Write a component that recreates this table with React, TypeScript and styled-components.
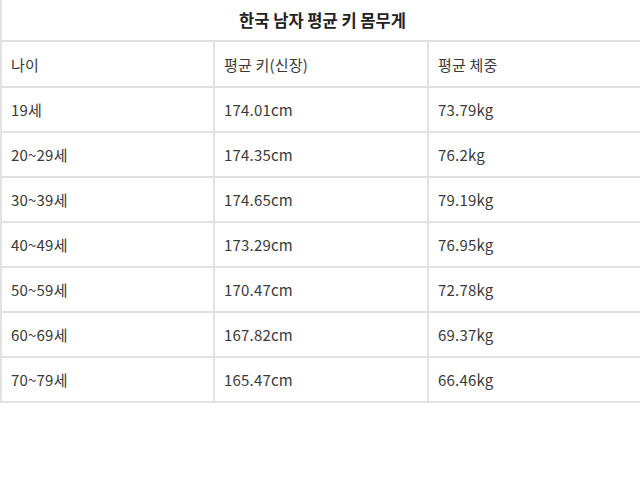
import styled, { createGlobalStyle } from 'styled-components';

const GlobalStyle = createGlobalStyle`
  html, body {
    margin: 0;
    padding: 0;
    overflow: hidden;
    background: #fff;
  }
`;

const Page = styled.main`
  width: 640px;
  height: 481px;
  overflow: hidden;
  font-family: 'Noto Sans CJK KR', 'Noto Sans', sans-serif;
  color: #333;
`;

const Table = styled.table`
  width: 644px;
  border-collapse: collapse;
  table-layout: fixed;
`;

const TitleCell = styled.th`
  height: 40px;
  padding: 0;
  font-size: 16.5px;
  font-weight: 700;
  color: #222;
  text-align: center;
  border-left: 2px solid #e2e2e2;
  border-bottom: 2px solid #e2e2e2;
`;

const Cell = styled.td<{ $head?: boolean }>`
  height: ${({ $head }) => ($head ? 44 : 43)}px;
  padding: 0 0 0 9px;
  font-size: 15px;
  font-weight: 400;
  letter-spacing: 0.2px;
  color: #3a3a3a;
  text-align: left;
  border: 2px solid #e2e2e2;
  border-top: none;
  white-space: nowrap;
`;

const rows: [string, string, string][] = [
  ['19세', '174.01cm', '73.79kg'],
  ['20~29세', '174.35cm', '76.2kg'],
  ['30~39세', '174.65cm', '79.19kg'],
  ['40~49세', '173.29cm', '76.95kg'],
  ['50~59세', '170.47cm', '72.78kg'],
  ['60~69세', '167.82cm', '69.37kg'],
  ['70~79세', '165.47cm', '66.46kg'],
];

const App = () => (
  <Page>
    <GlobalStyle />
    <Table>
      <colgroup>
        <col style={{ width: 213 }} />
        <col style={{ width: 214 }} />
        <col />
      </colgroup>
      <thead>
        <tr>
          <TitleCell colSpan={3}>한국 남자 평균 키 몸무게</TitleCell>
        </tr>
      </thead>
      <tbody>
        <tr>
          <Cell $head>나이</Cell>
          <Cell $head>평균 키(신장)</Cell>
          <Cell $head>평균 체중</Cell>
        </tr>
        {rows.map(([age, height, weight]) => (
          <tr key={age}>
            <Cell>{age}</Cell>
            <Cell>{height}</Cell>
            <Cell>{weight}</Cell>
          </tr>
        ))}
      </tbody>
    </Table>
  </Page>
);

export default App;
